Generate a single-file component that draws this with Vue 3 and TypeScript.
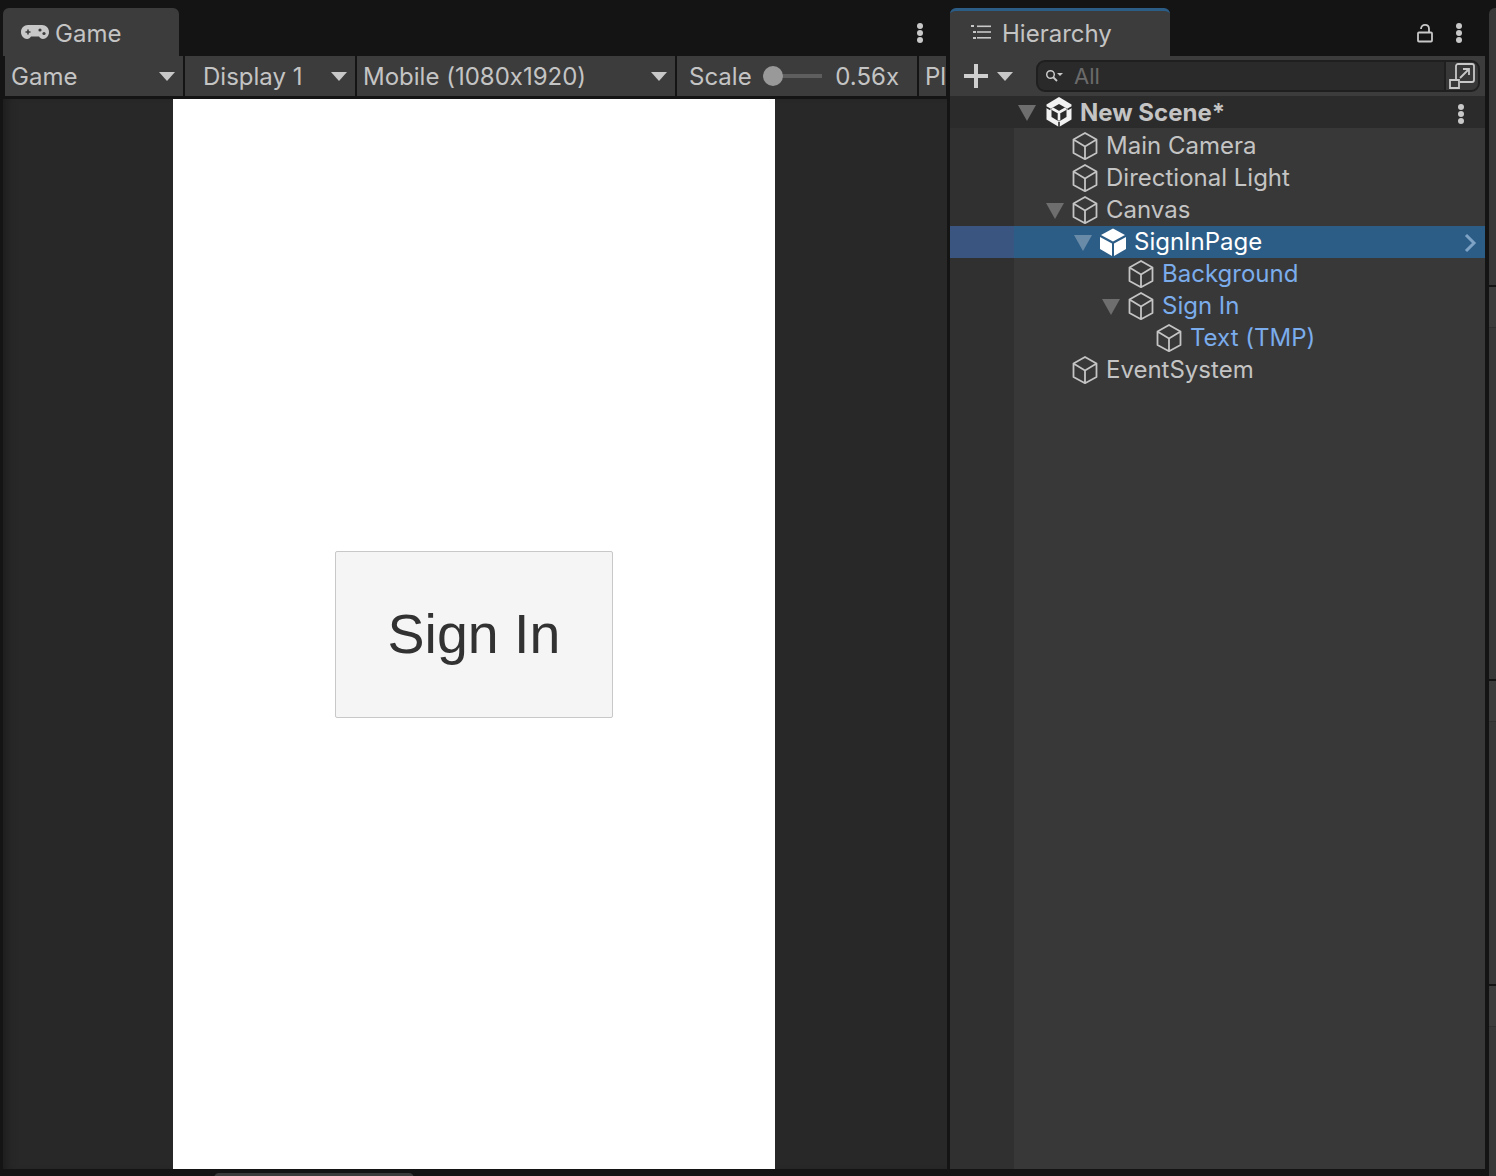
<script setup lang="ts">
interface TreeRow {
  name: string;
  depth: number;
  open?: boolean;
  prefab?: boolean;
  selected?: boolean;
}

const rows: TreeRow[] = [
  { name: 'Main Camera', depth: 1 },
  { name: 'Directional Light', depth: 1 },
  { name: 'Canvas', depth: 1, open: true },
  { name: 'SignInPage', depth: 2, open: true, selected: true },
  { name: 'Background', depth: 3, prefab: true },
  { name: 'Sign In', depth: 3, open: true, prefab: true },
  { name: 'Text (TMP)', depth: 4, prefab: true },
  { name: 'EventSystem', depth: 1 }
];

// heights of the collapsed panels peeking in on the right edge
const panes = [351, 262, 151];
</script>

<template>
  <div class="app">
    <section class="game">
      <div class="tabbar">
        <div class="tab game-tab">
          <svg class="pad" viewBox="0 0 28 14">
            <path fill="#c8c8c8" d="M7 0h14c4 0 7 3 7 7s-3 7-6 7c-2 0-3-1-4-2.500h-8C9 13 8 14 6 14c-3 0-6-3-6-7s3-7 7-7z" />
            <path stroke="#3c3c3c" stroke-width="1.600" d="M4.500 7h5M7 4.500v5" />
            <circle cx="19" cy="5" r="1.600" fill="#3c3c3c" />
            <circle cx="23" cy="8.500" r="1.600" fill="#3c3c3c" />
          </svg>
          <span>Game</span>
        </div>
        <div class="dots-wrap"><i /><i /><i /></div>
      </div>
      <div class="toolbar">
        <div class="seg seg-game"><span>Game</span><b class="caret" /></div>
        <div class="seg seg-display"><span>Display 1</span><b class="caret" /></div>
        <div class="seg seg-mobile"><span>Mobile (1080x1920)</span><b class="caret" /></div>
        <div class="seg seg-scale">
          <span>Scale</span>
          <div class="slider"><em /></div>
          <span>0.56x</span>
        </div>
        <div class="seg seg-play"><span>Pl</span></div>
      </div>
      <div class="view">
        <div class="screen">
          <button class="signin">Sign In</button>
        </div>
      </div>
    </section>

    <section class="hierarchy">
      <div class="tabbar">
        <div class="tab hier-tab">
          <svg class="list" viewBox="0 0 20 16">
            <g fill="#c8c8c8">
              <rect x="0" y="1" width="3" height="2" />
              <rect x="2" y="7" width="3" height="2" />
              <rect x="2" y="13" width="3" height="2" />
              <rect x="6" y="1.500" width="14" height="1.600" />
              <rect x="6" y="7.200" width="14" height="1.600" />
              <rect x="6" y="13" width="14" height="1.600" />
            </g>
          </svg>
          <span>Hierarchy</span>
        </div>
        <div class="tab-tools">
          <svg class="lock" viewBox="0 0 16 20">
            <path fill="none" stroke="#c8c8c8" stroke-width="1.800" d="M4 6c0-5.500 8-5.500 8 0v3.500M2 9.500h12c.6 0 1 .4 1 1v7c0 .6-.4 1-1 1H2c-.6 0-1-.4-1-1v-7c0-.6.4-1 1-1z" />
          </svg>
          <div class="dots-wrap"><i /><i /><i /></div>
        </div>
      </div>

      <div class="hier-toolbar">
        <svg class="plus" viewBox="0 0 24 24">
          <path stroke="#cfcfcf" stroke-width="4" d="M0 12h24M12 0v24" />
        </svg>
        <b class="caret plus-caret" />
        <div class="search">
          <svg class="glass" viewBox="0 0 18 14">
            <circle cx="5.500" cy="5.500" r="3.800" fill="none" stroke="#c8c8c8" stroke-width="1.500" />
            <path stroke="#c8c8c8" stroke-width="1.800" d="M8 8l4 4" />
            <path fill="#c8c8c8" d="M12 4h6l-3 3z" />
          </svg>
          <span class="search-text">All</span>
          <div class="search-btn">
            <svg viewBox="0 0 26 26">
              <path fill="none" stroke="#c8c8c8" stroke-width="1.800" d="M7 16V3c0-1 1-2 2-2h14c1 0 2 1 2 2v14c0 1-1 2-2 2H11" />
              <path fill="none" stroke="#c8c8c8" stroke-width="1.800" d="M11 15l9-9M14 6h6v6M1 17h9v8H1z" />
            </svg>
          </div>
        </div>
      </div>

      <div class="scene-row">
        <b class="arrow" />
        <svg class="unity" viewBox="0 0 28 30">
          <path fill="#f2f2f2" d="M14 0l12.500 7.500v15L14 30 1.500 22.500v-15z" />
          <path fill="#2b2b2b" d="M14 7l7.500 4.300v8.700L14 24.500 6.500 20v-8.700z" />
          <path fill="none" stroke="#f2f2f2" stroke-width="2.600" d="M7 11.500l7 4 7-4M14 15.500v8" />
          <path fill="none" stroke="#2b2b2b" stroke-width="1.600" d="M1 10l4.500 2.500M27 10l-4.500 2.500M14 30v-5" />
        </svg>
        <span class="scene-name">New Scene*</span>
        <div class="dots-wrap scene-dots"><i /><i /><i /></div>
      </div>

      <div class="tree">
        <div
          v-for="row in rows"
          :key="row.name"
          class="row"
          :class="{ selected: row.selected, prefab: row.prefab }"
          :style="{ paddingLeft: 94 + (row.depth - 1) * 28 + 'px' }"
        >
          <b v-if="row.open" class="arrow" />
          <span v-else class="arrow-gap" />
          <svg v-if="row.selected" class="cube" viewBox="0 0 28 28">
            <path fill="#fff" d="M14 .5l12 6.500-12 6.500L2 7zM1 9l12 6.500V28L1 21zM27 9v12l-12 7V15.500z" />
          </svg>
          <svg v-else class="cube" viewBox="0 0 28 28">
            <path fill="none" stroke="#c4c4c4" stroke-width="1.800" stroke-linejoin="round" d="M14 1l11.500 6.500V21L14 27.200 2.500 21V7.500zM2.500 7.500L14 14.500l11.500-7M14 14.500v12.700" />
          </svg>
          <span class="row-name">{{ row.name }}</span>
          <svg v-if="row.selected" class="chev" viewBox="0 0 14 20">
            <path fill="none" stroke="#7fa3c4" stroke-width="3" d="M3 2l8 8-8 8" />
          </svg>
        </div>
      </div>
    </section>

    <aside class="sliver">
      <div class="pane-top" />
      <div v-for="(h, i) in panes" :key="i" class="pane">
        <div class="pane-head" />
        <div class="pane-body" :style="{ height: h + 'px' }" />
      </div>
    </aside>

    <div class="scrollthumb" />
  </div>
</template>

<style scoped>
.app {
  position: relative;
  width: 1496px;
  height: 1176px;
  display: flex;
  overflow: hidden;
  background: #141414;
  color: #c4c4c4;
  font-family: Inter, "Liberation Sans", sans-serif;
  font-size: 24px;
  font-feature-settings: "calt" 0;
}

/* left panel */
.game {
  width: 947px;
  margin-left: 3px;
  height: 1169px;
  display: flex;
  flex-direction: column;
}
.tabbar {
  height: 56px;
  padding-top: 8px;
  box-sizing: border-box;
  display: flex;
  justify-content: space-between;
}
.tab {
  height: 48px;
  background: #3c3c3c;
  border-radius: 6px 6px 0 0;
  display: flex;
  align-items: center;
  box-sizing: border-box;
}
.game-tab {
  width: 176px;
  padding: 2px 0 0 18px;
  gap: 6px;
}
.pad {
  width: 28px;
  height: 14px;
  margin-top: -2px;
}
.dots-wrap {
  width: 8px;
  height: 20px;
  display: flex;
  flex-direction: column;
  justify-content: space-between;
  align-items: center;
  margin: 15px 26px 0 0;
}
.dots-wrap i {
  width: 6px;
  height: 6px;
  border-radius: 50%;
  background: #c8c8c8;
}
.toolbar {
  height: 40px;
  padding-left: 2px;
  display: flex;
  gap: 2px;
  width: 943px;
  box-sizing: border-box;
}
.seg {
  height: 40px;
  background: #3c3c3c;
  display: flex;
  align-items: center;
  box-sizing: border-box;
  white-space: nowrap;
}
.caret {
  width: 0;
  height: 0;
  border-left: 8px solid transparent;
  border-right: 8px solid transparent;
  border-top: 9px solid #c8c8c8;
  margin-left: auto;
}
.seg-game {
  width: 178px;
  padding: 0 8px 0 6px;
}
.seg-display {
  width: 170px;
  padding: 0 8px 0 18px;
}
.seg-mobile {
  width: 318px;
  padding: 0 8px 0 6px;
}
.seg-scale {
  width: 240px;
  padding: 0 18px 0 12px;
}
.seg-play {
  width: 27px;
  padding-left: 6px;
  overflow: hidden;
}
.slider {
  width: 60px;
  height: 4px;
  margin: 0 13px 0 11px;
  background: #5e5e5e;
  position: relative;
}
.slider em {
  position: absolute;
  left: 0;
  top: -8px;
  width: 20px;
  height: 20px;
  border-radius: 50%;
  background: #999;
}
.view {
  flex: 1;
  margin-top: 3px;
  background: #282828;
  display: flex;
  padding-left: 170px;
  width: 944px;
  box-sizing: border-box;
  box-shadow: inset 12px 0 12px -10px #191919;
}
.screen {
  width: 602px;
  background: #fff;
  display: flex;
  align-items: center;
  justify-content: center;
}
.signin {
  width: 278px;
  height: 167px;
  background: #f5f5f5;
  border: 1px solid #c8c8c8;
  border-radius: 2px;
  color: #323232;
  font-family: "Liberation Sans", Arial, sans-serif;
  font-size: 55.500px;
  padding: 0;
}

/* hierarchy panel */
.hierarchy {
  width: 535px;
  height: 1169px;
  display: flex;
  flex-direction: column;
}
.hier-tab {
  width: 220px;
  border-top: 3px solid #2c5d87;
  padding: 0 0 1px 21px;
  gap: 11px;
}
.list {
  width: 20px;
  height: 16px;
  margin-top: -2px;
}
.tab-tools {
  display: flex;
  align-items: flex-start;
}
.lock {
  width: 16px;
  height: 20px;
  margin: 15px 22px 0 0;
}
.tab-tools .dots-wrap {
  margin-right: 22px;
}
.hier-toolbar {
  height: 40px;
  background: #3c3c3c;
  display: flex;
  align-items: center;
  padding-left: 14px;
  box-sizing: border-box;
}
.plus {
  width: 24px;
  height: 24px;
}
.plus-caret {
  margin: 0 23px 0 9px;
}
.search {
  width: 444px;
  height: 32px;
  margin-bottom: 1px;
  background: #2a2a2a;
  border: 2px solid #1f1f1f;
  border-radius: 9px;
  box-sizing: border-box;
  display: flex;
  align-items: center;
  padding-left: 7px;
  overflow: hidden;
}
.glass {
  width: 18px;
  height: 14px;
  margin-right: 11px;
}
.search-text {
  color: #6a6a6a;
  font-size: 22px;
}
.search-btn {
  margin-left: auto;
  width: 34px;
  height: 28px;
  background: #383838;
  border-left: 2px solid #1f1f1f;
  box-sizing: border-box;
  display: flex;
  align-items: center;
  justify-content: center;
}
.search-btn svg {
  width: 26px;
  height: 26px;
}
.scene-row {
  height: 32px;
  background: #2b2b2b;
  display: flex;
  align-items: center;
  padding-left: 66px;
  box-sizing: border-box;
}
.arrow {
  flex: none;
  width: 0;
  height: 0;
  border-left: 9px solid transparent;
  border-right: 9px solid transparent;
  border-top: 16px solid #6e6e6e;
  margin: 2px 7px 0 2px;
}
.arrow-gap {
  flex: none;
  width: 27px;
}
.unity {
  width: 28px;
  height: 30px;
  margin-left: 2px;
}
.scene-name {
  font-weight: 700;
  margin-left: 7px;
}
.scene-dots {
  margin: 3px 20px 0 auto;
}
.tree {
  flex: 1;
  padding-top: 2px;
  background: linear-gradient(90deg, #303030 64px, #383838 64px);
}
.row {
  height: 32px;
  display: flex;
  align-items: center;
  box-sizing: border-box;
}
.selected {
  background: linear-gradient(90deg, #3a5580 64px, #2c5d87 64px);
  color: #fff;
}
.selected .arrow {
  border-top-color: #6a8ba8;
}
.prefab {
  color: #7bacec;
}
.cube {
  flex: none;
  width: 28px;
  height: 28px;
}
.row-name {
  margin: -2px 0 0 7px;
}
.chev {
  width: 14px;
  height: 20px;
  margin: 1px 8px 0 auto;
}

/* next panels peeking in on the right */
.sliver {
  margin-left: 4px;
  width: 7px;
  display: flex;
  flex-direction: column;
}
.pane-top {
  height: 277px;
  margin-top: 8px;
  background: #383838;
  border-radius: 6px 0 0 0;
  flex: none;
}
.pane {
  margin-top: 2px;
  flex: none;
}
.pane-head {
  height: 40px;
  background: #3c3c3c;
  border-bottom: 1px solid #303030;
}
.pane-body {
  background: #383838;
}
.scrollthumb {
  position: absolute;
  left: 214px;
  top: 1173px;
  width: 200px;
  height: 10px;
  background: #3c3c3c;
  border-radius: 6px;
}
</style>
